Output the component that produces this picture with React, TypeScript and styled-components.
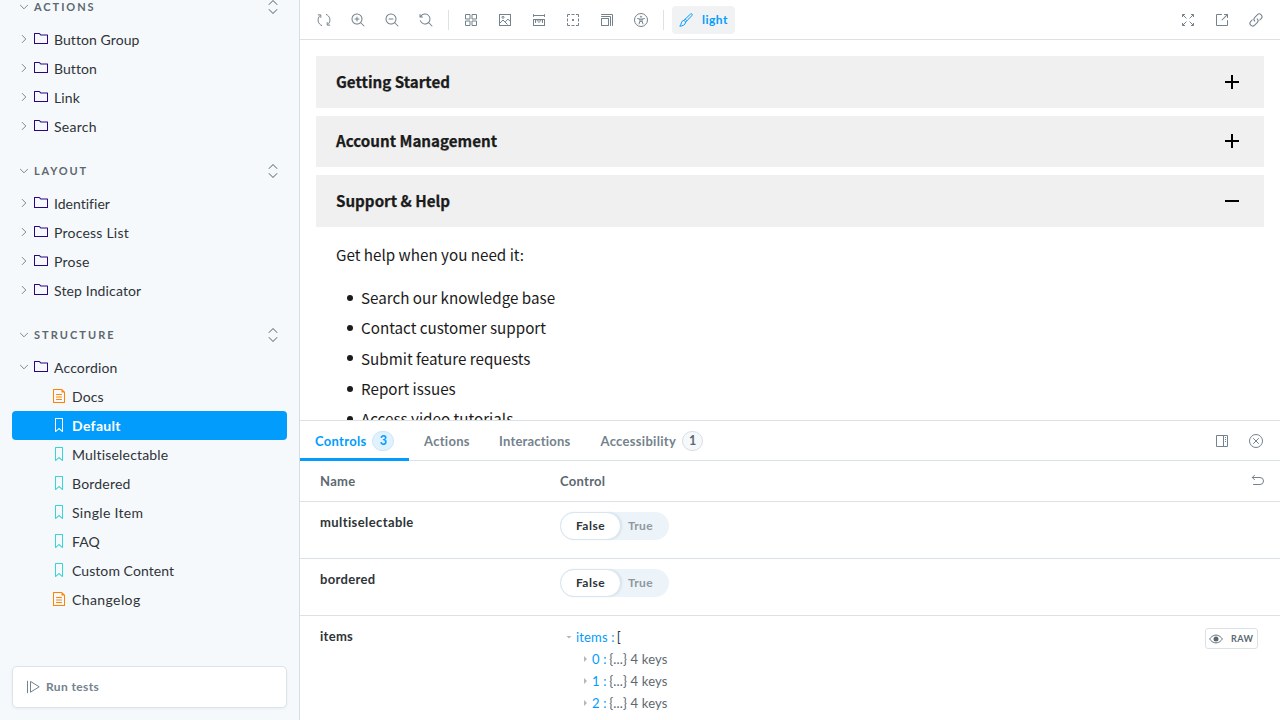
import React from "react";
import styled, { createGlobalStyle } from "styled-components";

const color = {
  text: "#2e3438",
  muted: "#73828c",
  accent: "#029cfd",
  line: "#dbe2e6",
  folder: "#2a0481",
  doc: "#ff8300",
  story: "#37d5d3",
};

const GlobalStyle = createGlobalStyle`
  * { box-sizing: border-box; }
  body {
    margin: 0;
    overflow: hidden;
    background: #fff;
    color: ${color.text};
    font-family: Lato, "Open Sans", sans-serif;
    font-size: 14px;
  }
`;

/* ---------- icons ---------- */

const Svg = styled.svg<{ $size?: number }>`
  display: block;
  flex: none;
  width: ${(p) => p.$size ?? 14}px;
  height: ${(p) => p.$size ?? 14}px;
  overflow: visible;
`;

const solid: Record<string, string[]> = {
  folder: [
    "M6.586 3.504l-1.5-1.5H1v9h12v-7.5H6.586zm.414-1L5.793 1.297a1 1 0 00-.707-.293H.5a.5.5 0 00-.5.5v10a.5.5 0 00.5.5h13a.5.5 0 00.5-.5v-8.5a.5.5 0 00-.5-.5H7z",
  ],
  doc: [
    "M4 5.5a.5.5 0 01.5-.5h5a.5.5 0 010 1h-5a.5.5 0 01-.5-.5zM4.5 7.5a.5.5 0 000 1h5a.5.5 0 000-1h-5zM4 10.5a.5.5 0 01.5-.5h5a.5.5 0 010 1h-5a.5.5 0 01-.5-.5z",
    "M1.5 0a.5.5 0 00-.5.5v13a.5.5 0 00.5.5h11a.5.5 0 00.5-.5V3.207a.5.5 0 00-.146-.353L10.146.146A.5.5 0 009.793 0H1.5zM2 1h7.5v2a.5.5 0 00.5.5h2V13H2V1z",
  ],
  story: [
    "M3.5 0h7a.5.5 0 01.5.5v13a.5.5 0 01-.454.498.462.462 0 01-.371-.118L7 11.159l-3.175 2.72a.46.46 0 01-.379.118A.5.5 0 013 13.5V.5a.5.5 0 01.5-.5zM4 12.413l2.664-2.284a.454.454 0 01.377-.128.498.498 0 01.284.12L10 12.412V1H4v11.413z",
  ],
  zoomIn: [
    "M6 3.5a.5.5 0 01.5.5v1.5H8a.5.5 0 010 1H6.5V8a.5.5 0 01-1 0V6.5H4a.5.5 0 010-1h1.5V4a.5.5 0 01.5-.5z",
    "M9.544 10.206a5.5 5.5 0 11.662-.662.5.5 0 01.148.102l3 3a.5.5 0 01-.708.708l-3-3a.5.5 0 01-.102-.148zM10.5 6a4.5 4.5 0 11-9 0 4.5 4.5 0 019 0z",
  ],
  zoomOut: [
    "M4 5.5a.5.5 0 000 1h4a.5.5 0 000-1H4z",
    "M9.544 10.206a5.5 5.5 0 11.662-.662.5.5 0 01.148.102l3 3a.5.5 0 01-.708.708l-3-3a.5.5 0 01-.102-.148zM10.5 6a4.5 4.5 0 11-9 0 4.5 4.5 0 019 0z",
  ],
  zoomReset: [
    "M1.5 2.837V1.5a.5.5 0 00-1 0V4a.5.5 0 00.5.5h2.5a.5.5 0 000-1H2.258a4.5 4.5 0 11-.496 4.016.5.5 0 10-.942.337 5.502 5.502 0 008.724 2.353.5.5 0 00.102.148l3 3a.5.5 0 00.708-.708l-3-3a.5.5 0 00-.148-.102A5.5 5.5 0 101.5 2.837z",
  ],
  ruler: [
    "M1.5 1.004a.5.5 0 01.5.5v.5h10v-.5a.5.5 0 011 0v2a.5.5 0 01-1 0v-.5H2v.5a.5.5 0 01-1 0v-2a.5.5 0 01.5-.5z",
    "M1.5 6a.5.5 0 00-.5.5v6a.5.5 0 00.5.5h11a.5.5 0 00.5-.5v-6a.5.5 0 00-.5-.5h-11zM2 7v5h10V7h-1v2.5a.5.5 0 01-1 0V7h-.75v1a.5.5 0 01-1 0V7H7.5v2.5a.5.5 0 01-1 0V7h-.75v1a.5.5 0 01-1 0V7H4v2.5a.5.5 0 01-1 0V7H2z",
  ],
  grow: [
    "M1.5 1.004a.5.5 0 100 1H12v10.5a.5.5 0 001 0v-10.5a1 1 0 00-1-1H1.5z",
    "M1 3.504a.5.5 0 01.5-.5H10a1 1 0 011 1v8.5a.5.5 0 01-1 0v-8.5H1.5a.5.5 0 01-.5-.5z",
    "M1.5 5.004a.5.5 0 00-.5.5v7a.5.5 0 00.5.5h7a.5.5 0 00.5-.5v-7a.5.5 0 00-.5-.5h-7zm.5 1v6h6v-6H2z",
  ],
  share: [
    "M2 1.004a1 1 0 00-1 1v10a1 1 0 001 1h10a1 1 0 001-1v-4.5a.5.5 0 00-1 0v4.5H2v-10h4.5a.5.5 0 000-1H2z",
    "M7.354 7.357L12 2.711v1.793a.5.5 0 001 0v-3a.5.5 0 00-.5-.5h-3a.5.5 0 100 1h1.793L6.646 6.65a.5.5 0 10.708.707z",
  ],
  link: [
    "M11.841 2.159a2.25 2.25 0 00-3.182 0l-2.5 2.5a2.25 2.25 0 000 3.182.5.5 0 01-.707.707 3.25 3.25 0 010-4.596l2.5-2.5a3.25 3.25 0 014.596 4.596l-2.063 2.063a4.27 4.27 0 00-.094-1.32l1.45-1.45a2.25 2.25 0 000-3.182z",
    "M3.61 7.21c-.1-.434-.132-.88-.095-1.321L1.452 7.952a3.25 3.25 0 104.596 4.596l2.5-2.5a3.25 3.25 0 000-4.596.5.5 0 00-.707.707 2.25 2.25 0 010 3.182l-2.5 2.5A2.25 2.25 0 112.159 8.66l1.45-1.45z",
  ],
  expandAll: [
    "M7.354.146l4 4a.5.5 0 01-.708.708L7 1.207 3.354 4.854a.5.5 0 11-.708-.708l4-4a.5.5 0 01.708 0zM11.354 9.146a.5.5 0 010 .708l-4 4a.5.5 0 01-.708 0l-4-4a.5.5 0 11.708-.708L7 12.793l3.646-3.647a.5.5 0 01.708 0z",
  ],
};

const lines: Record<string, React.ReactNode> = {
  sync: (
    <>
      <path d="M5 12.6A5.9 5.9 0 0 1 3.1 2.6M9 1.4a5.9 5.9 0 0 1 1.9 10" />
      <path d="M.9 1.9H3.8V4.8M13.1 12.1H10.2V9.2" />
    </>
  ),
  grid: (
    <path d="M1.5 1.5H6V6H1.5zM8 1.5h4.5V6H8zM1.5 8H6v4.5H1.5zM8 8h4.5v4.5H8z" />
  ),
  photo: (
    <>
      <rect x="1.5" y="1.5" width="11" height="11" />
      <path d="M1.8 10.2 5 7l4.5 4.5M7.2 8.9 10 6.1l2.4 2.4" />
      <circle cx="5" cy="4.3" r="1" />
    </>
  ),
  outline: (
    <>
      <path d="M1.5 4V1.5H4M5.5 1.5h3M10 1.5h2.5V4M12.5 5.5v3M12.5 10v2.5H10M8.5 12.5h-3M4 12.5H1.5V10M1.5 8.5v-3" />
      <path d="M6.1 7h1.8" strokeWidth="1.8" />
    </>
  ),
  accessibility: (
    <>
      <circle cx="7" cy="7" r="6.5" />
      <circle cx="7" cy="3.7" r=".6" />
      <path d="M3.6 5.6 6 6.1v2L5 10.9M10.4 5.6 8 6.1v2l1 2.8M6 6.1h2M6.2 8.4h1.6" strokeLinecap="round" />
    </>
  ),
  brush: (
    <path
      d="M11.5 1.1 4.9 7.3l1.8 1.8 6.2-6.6c.5-.6.5-1 .1-1.4s-.9-.5-1.5 0zM6.2 6.1l1.7 1.7M4.9 7.3c-1.5.4-2.2 1.3-2.5 2.5-.2 1.1-.7 2.200-1.600 3.400 2.700-.3 5.500-1.100 5.900-4.100"
      strokeLinejoin="round"
    />
  ),
  expand: (
    <>
      <path d="M1.5 4V1.5H4M10 1.5h2.5V4M12.5 10v2.5H10M4 12.5H1.5V10" />
      <path d="m1.7 1.7 3.7 3.7M12.3 1.7 8.6 5.4M12.3 12.3 8.6 8.6M1.7 12.3l3.7-3.7" />
    </>
  ),
  panel: (
    <>
      <path d="M1.5 1.5h11v11h-11zM8.5 1.5v11" />
      <path d="M10 3.5h1M10 5.5h1M10 7.5h1" />
    </>
  ),
  close: (
    <>
      <circle cx="7" cy="7" r="6.5" />
      <path d="m4.5 4.5 5 5M9.5 4.5l-5 5" strokeLinecap="round" />
    </>
  ),
  undo: (
    <path d="M3.5 1.3 1.3 3.5l2.2 2.2M1.5 3.5H9a3.5 3.5 0 0 1 0 7H2.5" strokeLinecap="round" />
  ),
  playAll: (
    <path d="M1.5 1.2v11.6M4.5 1.8v10.4L12.9 7z" strokeLinecap="round" strokeLinejoin="round" />
  ),
  eye: (
    <>
      <path d="M.6 7S3 3.1 7 3.1 13.4 7 13.4 7 11 10.9 7 10.9.6 7 .6 7z" />
      <circle cx="7" cy="7" r="2.5" fill="currentColor" stroke="none" />
    </>
  ),
};

function Icon({ name, size }: { name: string; size?: number }) {
  if (solid[name]) {
    return (
      <Svg viewBox="0 0 14 14" $size={size} fill="currentColor">
        {solid[name].map((d) => (
          <path key={d} d={d} fillRule="evenodd" clipRule="evenodd" />
        ))}
      </Svg>
    );
  }
  return (
    <Svg viewBox="0 0 14 14" $size={size} fill="none" stroke="currentColor" strokeWidth="1">
      {lines[name]}
    </Svg>
  );
}

/* ---------- shell ---------- */

const Shell = styled.div`
  display: grid;
  grid-template-columns: 300px 1fr;
  width: 1280px;
  height: 720px;
  overflow: hidden;
`;

const Tracked = styled.span<{ $track?: number }>`
  letter-spacing: ${(p) => p.$track ?? 0}px;
  white-space: nowrap;
`;

/* ---------- sidebar ---------- */

const Sidebar = styled.aside`
  display: flex;
  flex-direction: column;
  height: 720px;
  padding: 0 12px 12px;
  background: #f6f9fc;
  border-right: 1px solid #d5dde5;
`;

const Tree = styled.nav`
  flex: 1;
  min-height: 0;
  margin-top: -7px;
`;

const Group = styled.section`
  margin-bottom: 16px;
`;

const GroupHead = styled.header`
  display: flex;
  align-items: center;
  height: 28px;
  margin-bottom: 4px;
  padding: 0 7px 0 8px;
  color: ${color.muted};
  font-size: 11px;
`;

const GroupTitle = styled(Tracked)`
  flex: 1;
  margin: -2px 0 0 6px;
  color: #5c6870;
  font-weight: 700;
`;

const Chevron = styled.i`
  display: flex;
  align-items: center;
  justify-content: center;
  width: 8px;
  height: 8px;
  color: ${color.muted};
`;

function Toggle({ open }: { open?: boolean }) {
  return (
    <Chevron>
      <Svg viewBox="0 0 8 8" $size={8} fill="none" stroke="currentColor" strokeLinecap="round" strokeOpacity=".95">
        <path d={open ? "M.4 2.2 4 5.8 7.6 2.2" : "M2.2.4 5.8 4 2.2 7.6"} />
      </Svg>
    </Chevron>
  );
}

const Row = styled.div<{ $selected?: boolean; $leaf?: boolean }>`
  display: flex;
  align-items: center;
  height: 29px;
  padding-left: ${(p) => (p.$leaf ? 40 : 8)}px;
  border-radius: 4px;
  background: ${(p) => (p.$selected ? color.accent : "transparent")};
  color: ${(p) => (p.$selected ? "#fff" : color.text)};
  font-weight: ${(p) => (p.$selected ? 700 : 400)};
`;

const RowIcon = styled.span<{ $tone: string; $leaf?: boolean }>`
  margin: ${(p) => (p.$leaf ? "-1px 6px 0 0" : "-1px 6px 0 6px")};
  color: ${(p) => p.$tone};
`;

const RowToggle = styled.span`
  margin-top: -1px;
`;

const TestCard = styled.button`
  display: flex;
  align-items: center;
  gap: 6px;
  height: 42px;
  padding: 0 13px;
  border: 1px solid #dde4e9;
  border-radius: 5px;
  background: #fff;
  box-shadow: 0 1px 3px rgba(38, 85, 115, 0.08);
  color: ${color.muted};
  font: 700 12px Lato, sans-serif;
`;

const TestLabel = styled(Tracked)`
  margin-top: -2px;
`;

type Item = { label: string; track: number };
type Leaf = Item & { kind: "doc" | "story"; selected?: boolean };

const groups: { title: string; track: number; items: Item[] }[] = [
  {
    title: "ACTIONS",
    track: 1.95,
    items: [
      { label: "Button Group", track: 0.08 },
      { label: "Button", track: 0.08 },
      { label: "Link", track: 0.1 },
      { label: "Search", track: 0.28 },
    ],
  },
  {
    title: "LAYOUT",
    track: 1.85,
    items: [
      { label: "Identifier", track: 0.01 },
      { label: "Process List", track: 0.22 },
      { label: "Prose", track: 0.22 },
      { label: "Step Indicator", track: 0.13 },
    ],
  },
  { title: "STRUCTURE", track: 2.05, items: [] },
];

const leaves: Leaf[] = [
  { label: "Docs", track: 0.1, kind: "doc" },
  { label: "Default", track: 0.32, kind: "story", selected: true },
  { label: "Multiselectable", track: 0.18, kind: "story" },
  { label: "Bordered", track: 0.2, kind: "story" },
  { label: "Single Item", track: 0.32, kind: "story" },
  { label: "FAQ", track: 0.05, kind: "story" },
  { label: "Custom Content", track: 0.07, kind: "story" },
  { label: "Changelog", track: 0.4, kind: "doc" },
];

function FolderRow({ label, track, open }: Item & { open?: boolean }) {
  return (
    <Row>
      <RowToggle>
        <Toggle open={open} />
      </RowToggle>
      <RowIcon $tone={color.folder}>
        <Icon name="folder" />
      </RowIcon>
      <Tracked $track={track}>{label}</Tracked>
    </Row>
  );
}

/* ---------- toolbar ---------- */

const Main = styled.main`
  display: grid;
  grid-template-rows: 40px 380px 300px;
  min-width: 0;
`;

const Toolbar = styled.div`
  display: flex;
  align-items: center;
  gap: 6px;
  padding: 0 10px;
  border-bottom: 1px solid ${color.line};
`;

const Spacer = styled.div`
  flex: 1;
`;

const Divider = styled.div`
  width: 1px;
  height: 20px;
  margin: 0 2px;
  background: ${color.line};
`;

const IconButton = styled.button`
  display: flex;
  align-items: center;
  justify-content: center;
  width: 28px;
  height: 28px;
  padding: 0;
  border: 0;
  background: none;
  color: ${color.muted};
`;

const ThemeButton = styled.button`
  display: flex;
  align-items: center;
  gap: 9px;
  width: 63px;
  height: 28px;
  padding: 0 0 0 7px;
  border: 0;
  border-radius: 4px;
  background: #f1f2f4;
  color: ${color.accent};
  font: 700 12px Lato, sans-serif;
`;

/* ---------- preview ---------- */

const Preview = styled.div`
  overflow: hidden;
  padding: 16px;
  color: #1b1b1b;
  font-family: "Noto Sans CJK SC", sans-serif;
  font-size: 15.2px;
`;

const AccordionHead = styled.h4`
  display: flex;
  align-items: center;
  justify-content: space-between;
  height: 51.5px;
  margin: 0 0 8px;
  padding: 0 25px 0 20px;
  background: #f0f0f0;
  font-size: 15.16px;
  font-weight: 700;
  line-height: 20px;
`;

const AccordionTitle = styled.span`
  margin-top: -2px;
  -webkit-text-stroke: 0.25px currentColor;
`;

const AccordionBody = styled.div`
  padding: 7px 20px;
  line-height: 25.4px;
`;

const Lead = styled.p`
  margin: 0 0 18px;
`;

const Bullets = styled.ul`
  margin: 0;
  padding: 0;
  list-style: none;
`;

const Bullet = styled.li`
  display: flex;
  align-items: center;
  gap: 8px;
  height: 25.4px;
  margin: 0 0 4.95px 11px;

  &::before {
    content: "";
    width: 6px;
    height: 6px;
    border-radius: 50%;
    background: #1b1b1b;
  }
`;

function PlusMinus({ open }: { open?: boolean }) {
  return (
    <Svg viewBox="0 0 14 14" stroke="#000" strokeWidth="2">
      <path d={open ? "M0 7h14" : "M0 7h14M7 0v14"} />
    </Svg>
  );
}

/* ---------- addon panel ---------- */

const Panel = styled.div`
  display: flex;
  flex-direction: column;
  overflow: hidden;
  border-top: 1px solid ${color.line};
`;

const TabBar = styled.div`
  display: flex;
  flex: none;
  height: 40px;
  padding-right: 10px;
  border-bottom: 1px solid ${color.line};
`;

const Tab = styled.div<{ $active?: boolean; $width: number }>`
  display: flex;
  align-items: center;
  gap: 6px;
  width: ${(p) => p.$width}px;
  height: 40px;
  padding: 3px 0 0 15px;
  border-bottom: 3px solid ${(p) => (p.$active ? color.accent : "transparent")};
  color: ${(p) => (p.$active ? color.accent : color.muted)};
  font-size: 13px;
  font-weight: 700;
`;

const Badge = styled.span<{ $active?: boolean }>`
  display: flex;
  align-items: center;
  justify-content: center;
  width: ${(p) => (p.$active ? 22 : 21)}px;
  height: 20px;
  border: 1px solid ${(p) => (p.$active ? "#c9e6fa" : "#d6dee4")};
  border-radius: 10px;
  background: ${(p) => (p.$active ? "#e1f2fe" : "#f6f9fc")};
  color: ${(p) => (p.$active ? color.accent : "#5c6870")};
  font-size: 12.5px;
  line-height: 18px;
`;

const PanelTools = styled.div`
  display: flex;
  align-items: center;
  gap: 6px;
  margin-left: auto;
`;

const ArgRow = styled.div<{ $height: number; $head?: boolean }>`
  display: grid;
  flex: none;
  grid-template-columns: 240px 1fr auto;
  align-items: ${(p) => (p.$head ? "center" : "start")};
  height: ${(p) => p.$height}px;
  padding: ${(p) => (p.$head ? "0 15px 0 20px" : "10px 22px 0 20px")};
  border-bottom: 1px solid ${color.line};
  color: ${(p) => (p.$head ? "#5c6870" : color.text)};
  font-size: 13px;
  font-weight: 700;

  &:last-child {
    border-bottom: 0;
  }
`;

const ArgName = styled(Tracked)`
  line-height: 20px;
`;

const UndoButton = styled.span`
  color: ${color.muted};
`;

const Switch = styled.div`
  display: flex;
  align-items: center;
  width: 109px;
  height: 28px;
  border-radius: 14px;
  background: #ecf3f9;
  color: #8f989e;
  font-size: 12px;
`;

const SwitchOn = styled.div`
  display: flex;
  align-items: center;
  justify-content: center;
  width: 61px;
  height: 28px;
  margin-right: 7px;
  border: 1px solid #d8e6ef;
  border-radius: 14px;
  background: #fff;
  box-shadow: 1px 0 2px rgba(38, 85, 115, 0.1);
  color: ${color.text};
`;

const SwitchLabel = styled(Tracked)`
  padding-bottom: 1px;
`;

const Json = styled.div`
  padding: 0 0 0 6px;
  color: #5c6870;
  font-weight: 400;
  line-height: 22px;
`;

const JsonLine = styled.div<{ $depth?: number }>`
  display: flex;
  align-items: center;
  height: 22px;
  padding-left: ${(p) => (p.$depth ? 16 : 0)}px;
`;

const JsonKey = styled(Tracked)`
  margin-right: 2.6px;
  color: ${color.accent};
`;

const Bracket = styled.span`
  margin-left: -0.6px;
  color: ${color.text};
`;

const Caret = styled.i<{ $open?: boolean }>`
  width: ${(p) => (p.$open ? 6 : 3)}px;
  height: ${(p) => (p.$open ? 3 : 6)}px;
  margin: ${(p) => (p.$open ? "0 4px 0 0" : "0 5px 0 2px")};
  background: #b3b8bc;
  clip-path: ${(p) => (p.$open ? "polygon(0 0, 100% 0, 50% 100%)" : "polygon(0 0, 100% 50%, 0 100%)")};
`;

const RawButton = styled.button`
  display: flex;
  align-items: center;
  gap: 8px;
  width: 53px;
  height: 21px;
  margin-top: 2px;
  padding: 0 0 0 3px;
  border: 1px solid ${color.line};
  border-radius: 3px;
  background: #fff;
  color: #5c6870;
  font: 700 9px Lato, sans-serif;
`;

function BooleanArg({ name, track }: { name: string; track: number }) {
  return (
    <ArgRow $height={57}>
      <ArgName $track={track}>{name}</ArgName>
      <Switch>
        <SwitchOn>
          <SwitchLabel $track={0.5}>False</SwitchLabel>
        </SwitchOn>
        <SwitchLabel as="span" $track={0.3}>True</SwitchLabel>
      </Switch>
    </ArgRow>
  );
}

export default function App() {
  return (
    <Shell>
      <GlobalStyle />
      <Sidebar>
        <Tree>
          {groups.map((g) => (
            <Group key={g.title}>
              <GroupHead>
                <Toggle open />
                <GroupTitle $track={g.track}>{g.title}</GroupTitle>
                <Icon name="expandAll" />
              </GroupHead>
              {g.items.map((i) => (
                <FolderRow key={i.label} {...i} />
              ))}
              {g.title === "STRUCTURE" && (
                <>
                  <FolderRow label="Accordion" track={0.15} open />
                  {leaves.map((l) => (
                    <Row key={l.label} $leaf $selected={l.selected}>
                      <RowIcon $leaf $tone={l.selected ? "#fff" : color[l.kind]}>
                        <Icon name={l.kind} />
                      </RowIcon>
                      <Tracked $track={l.track}>{l.label}</Tracked>
                    </Row>
                  ))}
                </>
              )}
            </Group>
          ))}
        </Tree>
        <TestCard>
          <Icon name="playAll" />
          <TestLabel $track={0.38}>Run tests</TestLabel>
        </TestCard>
      </Sidebar>

      <Main>
        <Toolbar>
          {["sync", "zoomIn", "zoomOut", "zoomReset"].map((n) => (
            <IconButton key={n}>
              <Icon name={n} />
            </IconButton>
          ))}
          <Divider />
          {["grid", "photo", "ruler", "outline", "grow", "accessibility"].map((n) => (
            <IconButton key={n}>
              <Icon name={n} />
            </IconButton>
          ))}
          <Divider />
          <ThemeButton>
            <Icon name="brush" />
            <Tracked $track={0.5}>light</Tracked>
          </ThemeButton>
          <Spacer />
          {["expand", "share", "link"].map((n) => (
            <IconButton key={n}>
              <Icon name={n} />
            </IconButton>
          ))}
        </Toolbar>

        <Preview>
          <AccordionHead>
            <AccordionTitle>Getting Started</AccordionTitle>
            <PlusMinus />
          </AccordionHead>
          <AccordionHead>
            <AccordionTitle>Account Management</AccordionTitle>
            <PlusMinus />
          </AccordionHead>
          <AccordionHead>
            <AccordionTitle>Support &amp; Help</AccordionTitle>
            <PlusMinus open />
          </AccordionHead>
          <AccordionBody>
            <Lead>Get help when you need it:</Lead>
            <Bullets>
              <Bullet>Search our knowledge base</Bullet>
              <Bullet>Contact customer support</Bullet>
              <Bullet>Submit feature requests</Bullet>
              <Bullet>Report issues</Bullet>
              <Bullet>Access video tutorials</Bullet>
            </Bullets>
          </AccordionBody>
        </Preview>

        <Panel>
          <TabBar>
            <Tab $active $width={109}>
              <Tracked $track={0.3}>Controls</Tracked>
              <Badge $active>3</Badge>
            </Tab>
            <Tab $width={75}>
              <Tracked $track={0.3}>Actions</Tracked>
            </Tab>
            <Tab $width={101.5}>
              <Tracked $track={0.2}>Interactions</Tracked>
            </Tab>
            <Tab $width={132}>
              <Tracked $track={0.3}>Accessibility</Tracked>
              <Badge>1</Badge>
            </Tab>
            <PanelTools>
              <IconButton>
                <Icon name="panel" />
              </IconButton>
              <IconButton>
                <Icon name="close" />
              </IconButton>
            </PanelTools>
          </TabBar>
          <ArgRow $head $height={41}>
            <Tracked $track={0.3}>Name</Tracked>
            <Tracked $track={0.28}>Control</Tracked>
            <UndoButton>
              <Icon name="undo" />
            </UndoButton>
          </ArgRow>
          <BooleanArg name="multiselectable" track={0.4} />
          <BooleanArg name="bordered" track={0.32} />
          <ArgRow $height={105}>
            <ArgName $track={0.3}>items</ArgName>
            <Json>
              <JsonLine>
                <Caret $open />
                <JsonKey $track={0.17}>items :</JsonKey>
                <Bracket>[</Bracket>
              </JsonLine>
              {[0, 1, 2].map((n) => (
                <JsonLine key={n} $depth={1}>
                  <Caret />
                  <JsonKey $track={0.17}>{n} :</JsonKey>
                  <Tracked $track={0.16}>{"{...} 4 keys"}</Tracked>
                </JsonLine>
              ))}
            </Json>
            <RawButton>
              <Icon name="eye" />
              <Tracked $track={0.5}>RAW</Tracked>
            </RawButton>
          </ArgRow>
        </Panel>
      </Main>
    </Shell>
  );
}
